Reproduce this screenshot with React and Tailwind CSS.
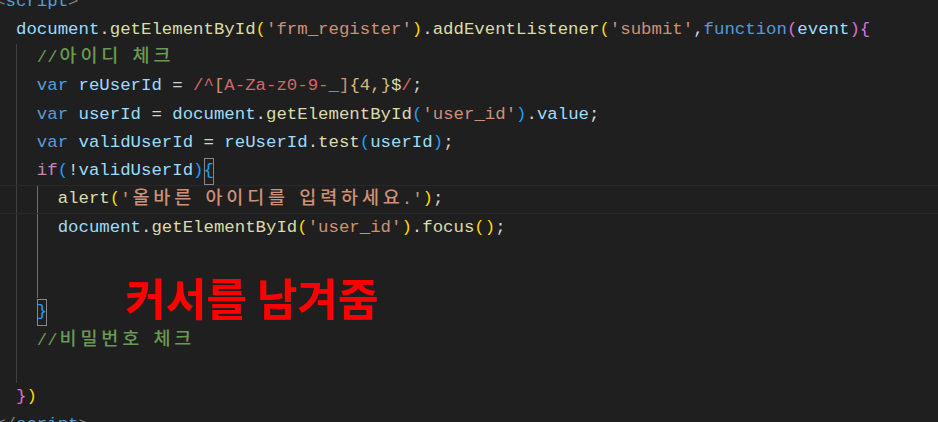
const tone = {
  v: "text-[#9CDCFE]",
  f: "text-[#DCDCAA]",
  s: "text-[#CE9178]",
  k: "text-[#569CD6]",
  p: "text-[#D4D4D4]",
  g: "text-[#FFD700]",
  m: "text-[#DA70D6]",
  b: "text-[#179FFF]",
  c: "text-[#6A9955]",
  r: "text-[#D16969]",
  ctl: "text-[#C586C0]",
  tag: "text-[#808080]",
  q: "text-[#D7BA7D]",
};

// [text, tone, boxed]
const lines = [
  { indent: 0, tokens: [["<", "tag"], ["script", "k"], [">", "tag"]] },
  {
    indent: 2,
    tokens: [
      ["document", "v"],
      [".", "p"],
      ["getElementById", "f"],
      ["(", "g"],
      ["'frm_register'", "s"],
      [")", "g"],
      [".", "p"],
      ["addEventListener", "f"],
      ["(", "g"],
      ["'submit'", "s"],
      [",", "p"],
      ["function", "k"],
      ["(", "m"],
      ["event", "v"],
      [")", "m"],
      ["{", "m"],
    ],
  },
  { indent: 4, guides: [1], tokens: [["//아이디 체크", "c"]] },
  {
    indent: 4,
    guides: [1],
    tokens: [
      ["var", "k"],
      [" ", "p"],
      ["reUserId", "v"],
      [" = ", "p"],
      ["/^", "r"],
      ["[", "s"],
      ["A-Za-z0-9-_", "r"],
      ["]", "s"],
      ["{4,}", "q"],
      ["$", "f"],
      ["/", "r"],
      [";", "p"],
    ],
  },
  {
    indent: 4,
    guides: [1],
    tokens: [
      ["var", "k"],
      [" ", "p"],
      ["userId", "v"],
      [" = ", "p"],
      ["document", "v"],
      [".", "p"],
      ["getElementById", "f"],
      ["(", "b"],
      ["'user_id'", "s"],
      [")", "b"],
      [".", "p"],
      ["value", "v"],
      [";", "p"],
    ],
  },
  {
    indent: 4,
    guides: [1],
    tokens: [
      ["var", "k"],
      [" ", "p"],
      ["validUserId", "v"],
      [" = ", "p"],
      ["reUserId", "v"],
      [".", "p"],
      ["test", "f"],
      ["(", "b"],
      ["userId", "v"],
      [")", "b"],
      [";", "p"],
    ],
  },
  {
    indent: 4,
    guides: [1],
    tokens: [
      ["if", "ctl"],
      ["(", "b"],
      ["!", "p"],
      ["validUserId", "v"],
      [")", "b"],
      ["{", "b", true],
    ],
  },
  {
    indent: 6,
    guides: [1, 2],
    current: true,
    tokens: [
      ["alert", "f"],
      ["(", "g"],
      ["'올바른 아이디를 입력하세요.'", "s"],
      [")", "g"],
      [";", "p"],
    ],
  },
  {
    indent: 6,
    guides: [1, 2],
    tokens: [
      ["document", "v"],
      [".", "p"],
      ["getElementById", "f"],
      ["(", "g"],
      ["'user_id'", "s"],
      [")", "g"],
      [".", "p"],
      ["focus", "f"],
      ["()", "g"],
      [";", "p"],
    ],
  },
  { indent: 6, guides: [1, 2], tokens: [] },
  { indent: 6, guides: [1, 2], tokens: [] },
  { indent: 4, guides: [1], tokens: [["}", "b", true]] },
  { indent: 4, guides: [1], tokens: [["//비밀번호 체크", "c"]] },
  { indent: 4, guides: [1], tokens: [] },
  { indent: 2, tokens: [["}", "m"], [")", "g"]] },
  { indent: 0, tokens: [["</", "tag"], ["script", "k"], [">", "tag"]] },
];

function Mono({ text }) {
  // hangul takes two cells, like the editor font does
  return text.split(/([\uAC00-\uD7A3])/).map((part, i) =>
    /[\uAC00-\uD7A3]/.test(part) ? (
      <span
        key={i}
        className="inline-block w-[20.86px] text-center text-[18.5px] font-medium"
      >
        {part}
      </span>
    ) : (
      part
    ),
  );
}

function CodeLine({ line }) {
  const levels = Math.floor(line.indent / 2);
  const guides = line.guides || [];

  return (
    <div
      className={`flex h-[28.25px] items-center whitespace-pre ${
        line.current ? "border-y border-[#282828]" : ""
      }`}
    >
      {Array.from({ length: levels }).map((_, i) => (
        <span
          key={i}
          className={`h-full w-[2ch] shrink-0 ${
            guides.includes(i)
              ? i === 2
                ? "border-l border-[#707070]"
                : "border-l border-[#404040]"
              : ""
          }`}
        />
      ))}

      {line.tokens.map(([text, t, boxed], i) =>
        boxed ? (
          <span
            key={i}
            className={`flex h-[27px] w-[1ch] items-center justify-center border border-[#888888] ${tone[t]}`}
          >
            {text}
          </span>
        ) : (
          <span key={i} className={tone[t]}>
            <Mono text={text} />
          </span>
        ),
      )}
    </div>
  );
}

export default function App() {
  return (
    <div className="relative h-[422px] w-[938px] overflow-hidden bg-[#1f1f1f]">
      <div className="ml-[-4.86px] mt-[-12.4px] font-['Liberation_Mono','Noto_Sans_CJK_KR',monospace] text-[17.38px]">
        {lines.map((line, i) => (
          <CodeLine key={i} line={line} />
        ))}
      </div>

      <p className="absolute left-[125px] top-[275px] font-['Noto_Sans_CJK_KR',sans-serif] text-[44px] font-bold leading-none text-[#FF0000]">
        커서를 남겨줌
      </p>
    </div>
  );
}
